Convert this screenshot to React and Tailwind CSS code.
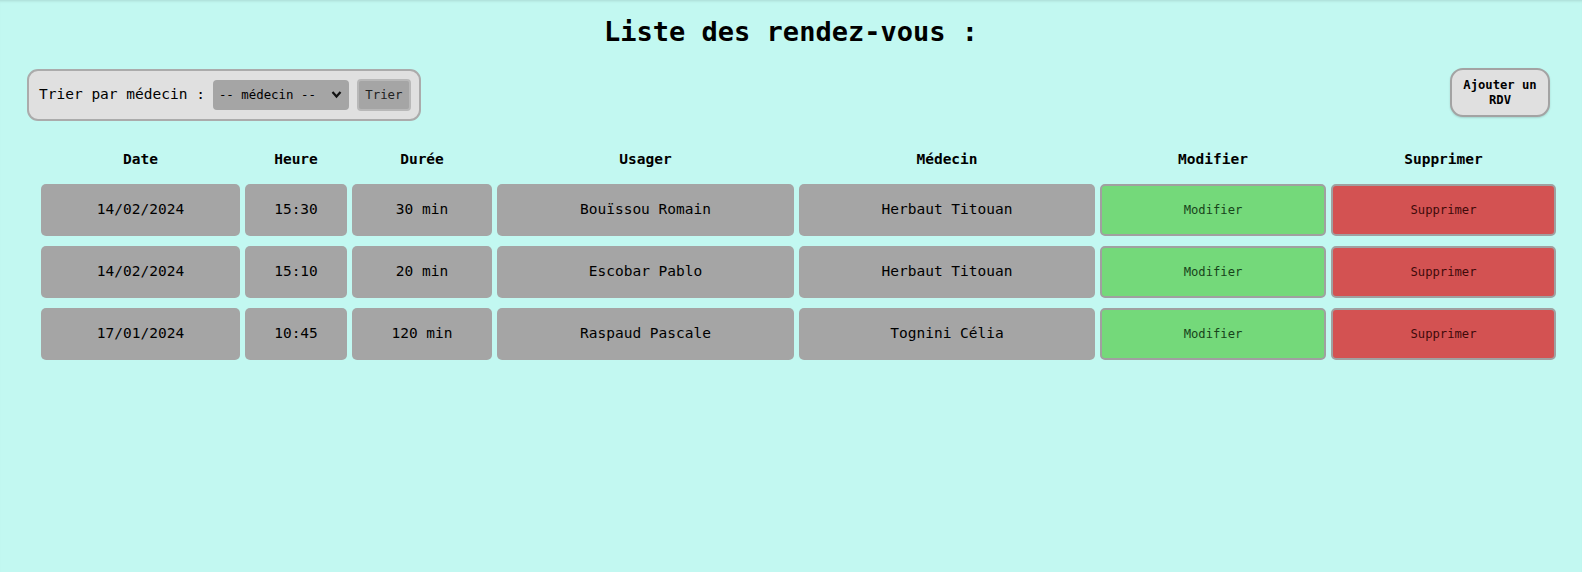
import React from 'react';

const rdvs = [
    { date: '14/02/2024', heure: '15:30', duree: '30 min', usager: 'Bouïssou Romain', medecin: 'Herbaut Titouan' },
    { date: '14/02/2024', heure: '15:10', duree: '20 min', usager: 'Escobar Pablo', medecin: 'Herbaut Titouan' },
    { date: '17/01/2024', heure: '10:45', duree: '120 min', usager: 'Raspaud Pascale', medecin: 'Tognini Célia' },
];

const headers = ['Date', 'Heure', 'Durée', 'Usager', 'Médecin', 'Modifier', 'Supprimer'];

function Cell({ children }) {
    return (
        <div className="h-[52px] rounded-[5px] bg-[#a5a5a5] flex items-center justify-center text-[14.5px] text-black">
            {children}
        </div>
    );
}

export default function App() {
    return (
        <div className="min-h-screen bg-[#c2f8f1] text-black font-['DejaVu_Sans_Mono','Liberation_Mono',monospace] shadow-[inset_0_3px_3px_-2px_rgba(0,0,0,0.12)]">
            {/* Title */}
            <h1 className="pt-[14px] text-center text-[27px] font-bold leading-[36px]">Liste des rendez-vous :</h1>

            {/* Filter bar */}
            <div className="mt-[19px] pl-[27px] pr-[32px] flex justify-between items-start">
                <form className="h-[52px] w-[394px] flex items-center gap-[6px] pl-[10px] rounded-[11px] border-2 border-[#ababab] bg-[#e0e0e0]">
                    <label className="text-[14.5px] mr-[2px]">Trier par médecin :</label>
                    <div className="relative">
                        <select className="appearance-none h-[30px] w-[136px] rounded-[4px] bg-[#a5a5a5] pl-[6px] text-[12.4px] outline-none">
                            <option>-- médecin --</option>
                        </select>
                        <svg className="absolute right-[7px] top-[10px] pointer-events-none" width="11" height="9" viewBox="0 0 11 9">
                            <path d="M1.5 2 L5.5 6.5 L9.5 2" fill="none" stroke="#111" strokeWidth="2.2" />
                        </svg>
                    </div>
                    <button type="button" className="h-[32px] w-[54px] ml-[2px] rounded-[4px] border-2 border-[#b8b8b8] bg-[#a5a5a5] text-[12.4px] text-[#222]">
                        Trier
                    </button>
                </form>
                <button className="mt-[-1px] h-[49px] w-[100px] rounded-[13px] border-2 border-[#a3a3a3] bg-[#e0e0e0] text-[12.2px] font-bold leading-[15px] shadow-[0_1px_2px_rgba(0,0,0,0.15)]">
                    Ajouter un<br />RDV
                </button>
            </div>

            {/* Table */}
            <div className="mt-[21px] ml-[41px] w-[1515px] grid grid-cols-[199px_102px_140px_297px_296px_226px_225px] gap-x-[5px] gap-y-[10px]">
                {headers.map((h) => (
                    <div key={h} className="h-[32px] text-center text-[14.5px] font-bold leading-[34px]">{h}</div>
                ))}
                {rdvs.map((r, i) => (
                    <React.Fragment key={i}>
                        <Cell>{r.date}</Cell>
                        <Cell>{r.heure}</Cell>
                        <Cell>{r.duree}</Cell>
                        <Cell>{r.usager}</Cell>
                        <Cell>{r.medecin}</Cell>
                        <button className="h-[52px] rounded-[5px] border-2 border-[#a0a0a0] bg-[#74d97a] text-[12.2px] text-[#17441a]">
                            Modifier
                        </button>
                        <button className="h-[52px] rounded-[5px] border-2 border-[#a0a0a0] bg-[#d35252] text-[12.2px] text-[#3f0a0a]">
                            Supprimer
                        </button>
                    </React.Fragment>
                ))}
            </div>
        </div>
    );
}
